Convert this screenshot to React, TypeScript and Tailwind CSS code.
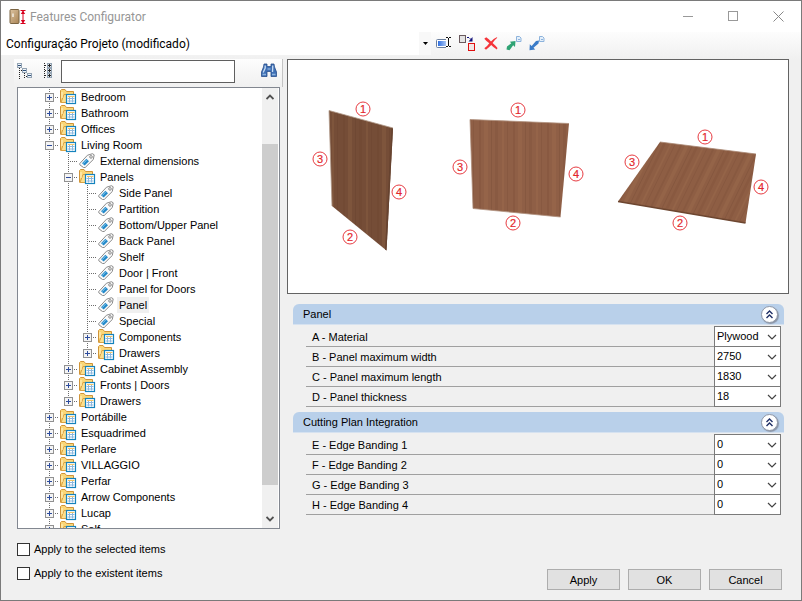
import { useState } from 'react'

type Guide = 'line' | 'leaf' | 'plus' | 'plusEnd' | 'minus'

type TreeRow = {
  label: string
  kind: 'folder' | 'tag'
  guides: Guide[]
}

/* ── Tree data, one entry per visible row ──────────────────────────────── */
const TREE: TreeRow[] = [
  { label: 'Bedroom', kind: 'folder', guides: ['plus'] },
  { label: 'Bathroom', kind: 'folder', guides: ['plus'] },
  { label: 'Offices', kind: 'folder', guides: ['plus'] },
  { label: 'Living Room', kind: 'folder', guides: ['minus'] },
  { label: 'External dimensions', kind: 'tag', guides: ['line', 'leaf'] },
  { label: 'Panels', kind: 'folder', guides: ['line', 'minus'] },
  { label: 'Side Panel', kind: 'tag', guides: ['line', 'line', 'leaf'] },
  { label: 'Partition', kind: 'tag', guides: ['line', 'line', 'leaf'] },
  { label: 'Bottom/Upper Panel', kind: 'tag', guides: ['line', 'line', 'leaf'] },
  { label: 'Back Panel', kind: 'tag', guides: ['line', 'line', 'leaf'] },
  { label: 'Shelf', kind: 'tag', guides: ['line', 'line', 'leaf'] },
  { label: 'Door | Front', kind: 'tag', guides: ['line', 'line', 'leaf'] },
  { label: 'Panel for Doors', kind: 'tag', guides: ['line', 'line', 'leaf'] },
  { label: 'Panel', kind: 'tag', guides: ['line', 'line', 'leaf'] },
  { label: 'Special', kind: 'tag', guides: ['line', 'line', 'leaf'] },
  { label: 'Components', kind: 'folder', guides: ['line', 'line', 'plus'] },
  { label: 'Drawers', kind: 'folder', guides: ['line', 'line', 'plusEnd'] },
  { label: 'Cabinet Assembly', kind: 'folder', guides: ['line', 'plus'] },
  { label: 'Fronts | Doors', kind: 'folder', guides: ['line', 'plus'] },
  { label: 'Drawers', kind: 'folder', guides: ['line', 'plusEnd'] },
  { label: 'Portábille', kind: 'folder', guides: ['plus'] },
  { label: 'Esquadrimed', kind: 'folder', guides: ['plus'] },
  { label: 'Perlare', kind: 'folder', guides: ['plus'] },
  { label: 'VILLAGGIO', kind: 'folder', guides: ['plus'] },
  { label: 'Perfar', kind: 'folder', guides: ['plus'] },
  { label: 'Arrow Components', kind: 'folder', guides: ['plus'] },
  { label: 'Lucap', kind: 'folder', guides: ['plus'] },
  { label: 'Self', kind: 'folder', guides: ['plus'] },
]

const GROUPS = [
  {
    title: 'Panel',
    rows: [
      { label: 'A - Material', value: 'Plywood' },
      { label: 'B - Panel maximum width', value: '2750' },
      { label: 'C - Panel maximum length', value: '1830' },
      { label: 'D - Panel thickness', value: '18' },
    ],
  },
  {
    title: 'Cutting Plan Integration',
    rows: [
      { label: 'E - Edge Banding 1', value: '0' },
      { label: 'F - Edge Banding 2', value: '0' },
      { label: 'G - Edge Banding 3', value: '0' },
      { label: 'H - Edge Banding 4', value: '0' },
    ],
  },
]

const MARKERS: [number, number, number][] = [
  [1, 363, 109], [2, 350, 237], [3, 320, 159], [4, 399, 192],
  [1, 518, 110], [2, 513, 223], [3, 460, 167], [4, 576, 174],
  [1, 705, 137], [2, 680, 223], [3, 632, 162], [4, 761, 187],
]

/* ── Icons ─────────────────────────────────────────────────────────────── */
function AppIcon() {
  return (
    <svg width="17" height="16" viewBox="0 0 17 16" aria-hidden="true">
      <defs>
        <linearGradient id="door" x1="0" y1="0" x2="1" y2="1">
          <stop offset="0" stopColor="#dcc3a0" />
          <stop offset="1" stopColor="#a98455" />
        </linearGradient>
      </defs>
      <rect x="1" y="0.5" width="9" height="14" rx="1" fill="url(#door)" stroke="#7b6442" />
      <path d="M4 4.500v3.500" stroke="#f6f2ea" strokeWidth="1.4" />
      <path d="M11.500 1.500h5M11.500 14.500h5M14 2v12" stroke="#d8001e" fill="none" />
      <path d="M14 1.500l2.200 3.500h-4.400zM14 14.500l2.200-3.500h-4.400z" fill="#d8001e" />
    </svg>
  )
}

function FolderIcon() {
  return (
    <svg className="ml-px shrink-0" width="17" height="16" viewBox="0 0 17 16" aria-hidden="true">
      <path d="M0.5 13.500V1.500L1.500 0.500H5L6.500 2.500H13.500V7" fill="#fbd778" stroke="#d09439" />
      <path d="M1 13.500L4 5.500H14V13.500z" fill="#fddf8c" stroke="#d9a245" />
      <path d="M2 3v6" stroke="#fff0bf" strokeWidth="1.200" />
      <rect x="6.500" y="5.500" width="9" height="9" fill="#fff" stroke="#1583bd" strokeWidth="1.200" />
      <path d="M8 7.500h6.500" stroke="#f0c468" />
      <path d="M9.500 8v5.500M12.500 8v5.500M7.500 9.500h7M7.500 12h7" stroke="#8db8de" />
    </svg>
  )
}

function TagIcon() {
  return (
    <svg className="ml-px shrink-0" width="17" height="16" viewBox="0 0 17 16" aria-hidden="true">
      <path d="M0.800 10.500L8.500 2.200L13.500 0.700L15.200 1.800L14.300 6.500L6.200 14.500L4.500 14.500L0.800 11.800z" fill="#fafafa" stroke="#8b8b8b" />
      <path d="M3 10.300L7.300 5.700L10 8.200L5.700 12.500z" fill="#2389c9" />
      <path d="M4.200 10.600L7.800 6.800" stroke="#8acbee" />
      <circle cx="12" cy="3.900" r="1.300" fill="#fff" stroke="#7c7c7c" strokeWidth="0.900" />
    </svg>
  )
}

function GuideCell({ type }: { type: Guide }) {
  const box = type === 'plus' || type === 'plusEnd' || type === 'minus'
  const drawing = (
    <svg className="block" width="19" height="16" viewBox="0 0 19 16" shapeRendering="crispEdges" aria-hidden="true">
      <path d={type === 'plusEnd' ? 'M9.5 0V8' : 'M9.5 0V16'} stroke="#6d6d6d" strokeDasharray="1 1" />
      {type !== 'line' && <path d="M9 8.500H19" stroke="#6d6d6d" strokeDasharray="1 1" />}
      {box && (
        <>
          <rect x="5.500" y="4.500" width="8" height="8" fill="#f4f4f4" stroke="#919191" />
          <path d={type === 'minus' ? 'M7 8.500h5' : 'M7 8.500h5M9.500 6v5'} stroke="#2c4b9c" />
        </>
      )}
    </svg>
  )
  if (!box) return <span className="shrink-0">{drawing}</span>
  return (
    <button type="button" className="shrink-0" aria-label={type === 'minus' ? 'Collapse' : 'Expand'}>
      {drawing}
    </button>
  )
}

function CollapseAllIcon() {
  return (
    <svg width="16" height="16" viewBox="0 0 16 16" shapeRendering="crispEdges" aria-hidden="true">
      <path d="M2.500 5v11M7.500 10v6M5 7.500h-2M10 13.500h-2" stroke="#222" strokeDasharray="1 1" fill="none" />
      <g fill="#eef3f8" stroke="#93a3b3">
        <rect x="0.500" y="0.500" width="4" height="4" />
        <rect x="5.500" y="5.500" width="4" height="4" />
        <rect x="10.500" y="10.500" width="4" height="4" />
      </g>
      <path d="M1 2.500h3M6 7.500h3M11 12.500h3" stroke="#31537c" />
    </svg>
  )
}

function ExpandAllIcon() {
  return (
    <svg width="10" height="16" viewBox="0 0 10 16" shapeRendering="crispEdges" aria-hidden="true">
      <path d="M1.500 0v16M2 2.500h3M2 7.500h3M2 12.500h3" stroke="#222" strokeDasharray="1 1" />
      <g fill="#dfe6ec" stroke="#93a3b3">
        <rect x="4.500" y="0.500" width="4" height="4" />
        <rect x="4.500" y="5.500" width="4" height="4" />
        <rect x="4.500" y="10.500" width="4" height="4" />
      </g>
      <path d="M5 2.500h3M5 7.500h3M5 12.500h3M6.500 1v3M6.500 6v3M6.500 11v3" stroke="#222" />
    </svg>
  )
}

function BinocularsIcon() {
  return (
    <svg width="16" height="15" viewBox="0 0 16 15" aria-hidden="true">
      <path d="M3 1h3v2.500h4V1h3l.5 3 2 5v4.500H10V8.500H6v5H.5V9l2-5z" fill="#3f70b5" stroke="#2a4f8c" strokeWidth="0.800" />
      <path d="M4.200 2.500v2.500L2.200 9.500M11.700 2.500v2.500L11.500 9" stroke="#c9ddf3" strokeWidth="1.300" fill="none" />
      <path d="M1.500 11.500h3.500M11 11.500h3.500" stroke="#8db3de" strokeWidth="1.600" />
      <path d="M6.500 6h3" stroke="#a9c6e8" />
    </svg>
  )
}

function RenameIcon() {
  return (
    <svg width="16" height="16" viewBox="0 0 16 16" aria-hidden="true">
      <defs>
        <linearGradient id="field" x1="0" x2="1">
          <stop offset="0" stopColor="#2f6fe0" />
          <stop offset="1" stopColor="#a9c6f6" />
        </linearGradient>
      </defs>
      <rect x="0.500" y="4.500" width="12" height="8" rx="1" fill="#fff" stroke="#6b7f9e" />
      <rect x="2" y="6" width="8" height="5" fill="url(#field)" />
      <rect x="10" y="3" width="4" height="10" fill="#fbfbfb" />
      <path d="M10 2.500h2M13 2.500h2M12.500 3v8M10 11.500h2M13 11.500h2" stroke="#111" />
    </svg>
  )
}

function ReplaceIcon() {
  return (
    <svg width="17" height="17" viewBox="0 0 17 17" aria-hidden="true">
      <rect x="0.500" y="0.500" width="6" height="7" fill="#e4e4e4" stroke="#6a5a5e" />
      <path d="M8 2.500h2l2 2" stroke="#10107a" fill="none" strokeDasharray="2 1" />
      <path d="M13.500 2v4.500H9.500z" fill="#10107a" />
      <rect x="9.500" y="8.500" width="6" height="7" fill="#f1e6e6" stroke="#e00f0f" />
    </svg>
  )
}

function DeleteIcon() {
  return (
    <svg width="14" height="13" viewBox="0 0 14 13" aria-hidden="true">
      <path d="M0.300 1.800L2.200 0.300Q5 2 7 4.500Q9.500 1.500 12.700 0.200L13.300 0.800Q10.500 3 8.600 6Q11.500 8.500 13.500 11L12.800 12.500Q9.500 10.500 7.200 8Q5 10.500 2 12.700L0.300 11.200Q3.500 9 5.300 6.200Q2.500 4.500 0.300 1.800z" fill="#f5343a" />
    </svg>
  )
}

function PageGlyph() {
  return (
    <>
      <path d="M10.500 0.500h3l1.500 1.500v3.500h-4.500z" fill="#e4effa" stroke="#8db3dc" />
      <path d="M12 3.500h2" stroke="#8db3dc" />
    </>
  )
}

function ExportIcon() {
  return (
    <svg width="16" height="15" viewBox="0 0 16 15" aria-hidden="true">
      <PageGlyph />
      <path d="M9.500 5L9 11L7.200 9.200L3.500 14.200L0.500 13.500L1 10.500L5.300 7.300L3.800 5.800z" fill="#2fa374" />
    </svg>
  )
}

function ImportIcon() {
  return (
    <svg width="16" height="15" viewBox="0 0 16 15" aria-hidden="true">
      <PageGlyph />
      <path d="M0.500 14.200L0.800 8.300L2.700 10L7 5L10 4.500L9.500 7.500L4.500 11.700L6.200 13.500z" fill="#3a7bc8" />
    </svg>
  )
}

function Chevron({ up }: { up?: boolean }) {
  return (
    <svg width="10" height="6" viewBox="0 0 10 6" fill="none" aria-hidden="true">
      <path d={up ? 'M1 5L5 1L9 5' : 'M1 1L5 5L9 1'} stroke="#444" strokeWidth="1.200" />
    </svg>
  )
}

/* Heavier arrow used by the scroll bar */
function ScrollArrow({ up }: { up?: boolean }) {
  return (
    <svg width="8" height="6" viewBox="0 0 8 6" fill="none" aria-hidden="true">
      <path d={up ? 'M0.500 5L4 1.500L7.500 5' : 'M0.500 1L4 4.500L7.500 1'} stroke="#505050" strokeWidth="1.800" />
    </svg>
  )
}

/* ── Wooden panels with numbered edges ─────────────────────────────────── */
function GrainRects() {
  return (
    <>
      <rect x="3" width="2" height="40" fill="#5a3321" opacity="0.12" />
      <rect x="8" width="4" height="40" fill="#c08a66" opacity="0.12" />
      <rect x="15" width="1" height="40" fill="#4e2b1b" opacity="0.14" />
      <rect x="19" width="3" height="40" fill="#5a3321" opacity="0.1" />
      <rect x="26" width="2" height="40" fill="#c08a66" opacity="0.12" />
      <rect x="31" width="1" height="40" fill="#5a3321" opacity="0.14" />
    </>
  )
}

function Preview() {
  return (
    <svg className="block h-[233px] w-full" viewBox="288 60 500 233" role="img" aria-label="Panel edge numbering">
      <defs>
        <pattern id="grain" width="34" height="40" patternUnits="userSpaceOnUse">
          <GrainRects />
        </pattern>
        <pattern id="grainFlat" width="34" height="40" patternUnits="userSpaceOnUse" patternTransform="skewX(-26)">
          <GrainRects />
        </pattern>
      </defs>
      <path d="M329 110.500L393 128L386.500 250.500L332 206z" fill="#754d37" />
      <path d="M329 110.500L393 128L386.500 250.500L332 206z" fill="url(#grain)" />
      <path d="M393 128L386.500 250.500L385 249.500L391.500 128z" fill="#664330" />
      <path d="M332 206L329 110.500L393 128" fill="none" stroke="#b39c8c" strokeWidth="0.800" />

      <path d="M470 119.500L569 123.500L560.500 217L473 208.500z" fill="#8f5f46" />
      <path d="M470 119.500L569 123.500L560.500 217L473 208.500z" fill="url(#grain)" />
      <path d="M569 123.500L470 119.500L473 208.500L560.500 217" fill="none" stroke="#b0917e" strokeWidth="0.800" />

      <path d="M660 142L756 154L745.500 223L618 201.500z" fill="#8e5e44" />
      <path d="M660 142L756 154L745.500 223L618 201.500z" fill="url(#grainFlat)" />
      <path d="M618 201.500L745.500 223" stroke="#6d4630" strokeWidth="1.500" />
      <path d="M660 142L756 154" stroke="#a98873" strokeWidth="0.800" />

      {MARKERS.map(([n, x, y]) => (
        <g key={`${x}-${y}`}>
          <circle cx={x} cy={y} r="7" fill="#fff" stroke="#e3262c" strokeWidth="0.900" />
          <text x={x} y={y + 4} textAnchor="middle" fontSize="11" fill="#e3262c" stroke="#e3262c" strokeWidth="0.200">
            {n}
          </text>
        </g>
      ))}
    </svg>
  )
}

/* ── Property group ────────────────────────────────────────────────────── */
function Group({ title, rows }: { title: string; rows: { label: string; value: string }[] }) {
  return (
    <section className="mb-[5px]">
      <header className="flex h-[21px] items-center justify-between rounded-t-md border-b border-[#d6e2f0] bg-[#b9d0ea] pr-1.5 pl-2.5">
        <h2>{title}</h2>
        <button
          type="button"
          aria-label={`Collapse ${title}`}
          className="flex size-[17px] items-center justify-center rounded-full border border-[#8f98a8] bg-white shadow-[1px_1px_1px_#8a94a6]"
        >
          <svg width="9" height="9" viewBox="0 0 9 9" fill="none" aria-hidden="true">
            <path d="M1.500 4L4.500 1L7.500 4M1.500 8L4.500 5L7.500 8" stroke="#1f2f66" strokeWidth="1.400" />
          </svg>
        </button>
      </header>
      <div className="mt-0.5 mr-[3px] ml-[13px]">
        {rows.map(({ label, value }) => (
          <div key={label} className="flex">
            <label htmlFor={label} className="flex h-5 flex-1 items-center border-b border-[#a0a0a0] pl-1.5">
              {label}
            </label>
            <div className="relative -mt-px w-[67px]">
              <select
                id={label}
                className="block h-[21px] w-full appearance-none border border-[#7a7a7a] bg-white pr-4 pb-px pl-0.5 text-[11px]"
              >
                <option>{value}</option>
              </select>
              <span className="pointer-events-none absolute top-2 right-1">
                <Chevron />
              </span>
            </div>
          </div>
        ))}
      </div>
    </section>
  )
}

export default function App() {
  const [selected, setSelected] = useState('Panel')

  return (
    <div className="flex h-screen flex-col border border-[#7a7a7a] bg-[#f0f0f0] font-['Liberation_Sans',Arial,sans-serif] text-[11px] leading-4 text-black">
      {/* Title bar */}
      <header className="flex h-[31px] shrink-0 items-center bg-white pl-2">
        <AppIcon />
        <h1 className="ml-1 flex-1 font-[Roboto,sans-serif] text-xs text-[#969696]">Features Configurator</h1>
        <button type="button" aria-label="Minimize" className="flex h-full w-[45px] items-center justify-center">
          <svg width="11" height="11" viewBox="0 0 11 11" aria-hidden="true">
            <path d="M0 5.500h10" stroke="#999" />
          </svg>
        </button>
        <button type="button" aria-label="Maximize" className="flex h-full w-[45px] items-center justify-center">
          <svg width="11" height="11" viewBox="0 0 11 11" fill="none" aria-hidden="true">
            <rect x="0.500" y="0.500" width="9" height="9" stroke="#999" />
          </svg>
        </button>
        <button type="button" aria-label="Close" className="flex h-full w-[45px] items-center justify-center">
          <svg width="11" height="11" viewBox="0 0 11 11" aria-hidden="true">
            <path d="M0.500 0.500l10 10M10.500 0.500l-10 10" stroke="#888" />
          </svg>
        </button>
      </header>

      {/* Configuration toolbar */}
      <div className="flex h-[27px] shrink-0 items-start bg-linear-to-b from-[#fdfdfd] to-[#f0f0f0]">
        <div className="relative w-[430px]">
          <select
            aria-label="Configuration"
            className="block h-[23px] w-full appearance-none bg-white pl-[5px] font-[Roboto,sans-serif] text-xs"
          >
            <option>Configuração Projeto (modificado)</option>
          </select>
          <span className="pointer-events-none absolute top-0 right-0 flex h-[23px] w-3 items-center justify-center bg-[#f8f8f8]">
            <svg width="5" height="3" viewBox="0 0 5 3" aria-hidden="true">
              <path d="M0 0h5L2.500 3z" fill="#000" />
            </svg>
          </span>
        </div>
        <div className="flex h-[22px] items-center gap-[7px] pl-[5px]">
          <button type="button" aria-label="Rename"><RenameIcon /></button>
          <button type="button" aria-label="Replace"><ReplaceIcon /></button>
          <button type="button" aria-label="Delete" className="px-px"><DeleteIcon /></button>
          <button type="button" aria-label="Export"><ExportIcon /></button>
          <button type="button" aria-label="Import"><ImportIcon /></button>
        </div>
      </div>

      <main className="flex min-h-0 flex-1 pr-3">
        {/* Feature tree */}
        <div className="mr-1 ml-[13px] flex w-[269px] shrink-0 flex-col">
          <div className="flex h-7 shrink-0 items-start border-r border-[#c4c4c4] bg-linear-to-b from-[#fdfdfd] to-[#f0f0f0] pt-px pl-[3px]">
            <button type="button" aria-label="Collapse all" className="pt-[3px]"><CollapseAllIcon /></button>
            <button type="button" aria-label="Expand all" className="mr-2 ml-[10px] pt-[3px]"><ExpandAllIcon /></button>
            <input
              type="text"
              aria-label="Search"
              className="h-[23px] w-[174px] border border-[#5f5f5f] bg-white px-1"
            />
            <button type="button" aria-label="Find" className="ml-auto pt-[3px] pr-[5px]"><BinocularsIcon /></button>
          </div>

          <div className="mr-[3px] ml-[3px] flex min-h-0 flex-1 border border-[#828790] bg-white">
            <ul className="min-w-0 flex-1 overflow-hidden pt-px pl-[22px]">
              {TREE.map((row, i) => (
                <li key={i} className="flex h-4 items-center whitespace-nowrap">
                  {row.guides.map((g, j) => (
                    <GuideCell key={j} type={g} />
                  ))}
                  {row.kind === 'folder' ? <FolderIcon /> : <TagIcon />}
                  <button
                    type="button"
                    onClick={() => setSelected(row.label)}
                    className={`ml-0.5 px-0.5 ${selected === row.label ? 'bg-[#f0f0f0]' : ''}`}
                  >
                    {row.label}
                  </button>
                </li>
              ))}
            </ul>
            <div className="flex w-[17px] shrink-0 flex-col border-r border-white bg-[#f0f0f0]">
              <button type="button" aria-label="Scroll up" className="flex h-[18px] items-center justify-center">
                <ScrollArrow up />
              </button>
              <div className="flex flex-1 flex-col">
                <div className="basis-[38px]" />
                <div className="flex-1 bg-[#cdcdcd]" />
                <div className="basis-[25px]" />
              </div>
              <button type="button" aria-label="Scroll down" className="flex h-[18px] items-center justify-center">
                <ScrollArrow />
              </button>
            </div>
          </div>
        </div>

        {/* Preview and properties */}
        <div className="flex min-w-0 flex-1 flex-col">
          <div className="mb-2.5 border border-[#636363] bg-white">
            <Preview />
          </div>
          <div className="mr-[5px] ml-1.5">
            {GROUPS.map((g) => (
              <Group key={g.title} title={g.title} rows={g.rows} />
            ))}
          </div>
        </div>
      </main>

      <footer className="flex shrink-0 justify-between pt-3 pr-[19px] pb-2.5 pl-4">
        <div className="flex flex-col gap-2 pb-[9px]">
          {['Apply to the selected items', 'Apply to the existent items'].map((text) => (
            <label key={text} className="flex items-center gap-1">
              <input type="checkbox" className="size-[13px] appearance-none border border-[#333] bg-white checked:bg-[#333]" />
              {text}
            </label>
          ))}
        </div>
        <div className="flex items-end gap-2">
          {['Apply', 'OK', 'Cancel'].map((text) => (
            <button key={text} type="button" className="h-[21px] w-[73px] border border-[#adadad] bg-[#e1e1e1]">
              {text}
            </button>
          ))}
        </div>
      </footer>
    </div>
  )
}
